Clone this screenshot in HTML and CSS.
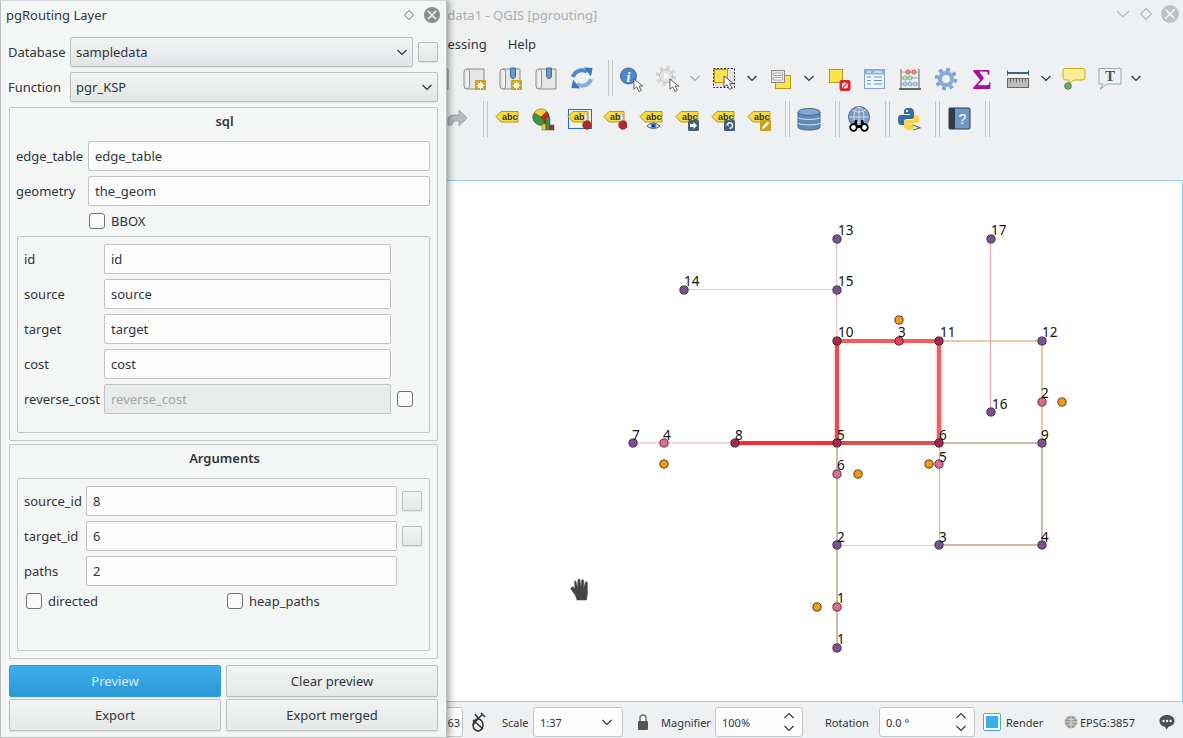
FILE: index.html
```html
<!doctype html>
<html lang="en">
<head>
  <meta charset="UTF-8">
  <title>pgRouting Layer - QGIS</title>
  <link rel="stylesheet" href="styles.css">
</head>
<body>
<svg class="defs" width="0" height="0">
  <symbol id="chev" viewBox="0 0 12 12"><polyline points="1.5,4 6,8.5 10.5,4" fill="none" stroke="#31363b" stroke-width="1.2"/></symbol>
  <symbol id="cursor" viewBox="0 0 13 16" overflow="visible"><path d="M1 1V12L4 9.5L6.5 14.5L9 13.3L6.7 8.6H10.5Z" fill="#fff" stroke="#555" stroke-width="1"/></symbol>
  <symbol id="scroll" viewBox="0 0 24 24"><path d="M5 3H22V23H5Q2 23 2 20V6Q2 3 5 3Z" fill="#e6e6e6" stroke="#8c8c8c"/><path d="M5 3Q7.500 3 7.500 6V20Q7.500 23 5 23" fill="#f4f4f4" stroke="#8c8c8c"/></symbol>
  <symbol id="mark" viewBox="0 0 24 24"><path d="M12.500 2H17.500V11L15 13L12.500 11Z" fill="#6f97c4" stroke="#3e6a9a"/></symbol>
  <symbol id="gearbadge" viewBox="0 0 24 24"><rect x="13" y="14" width="11" height="11" rx="1" fill="#c9a31e"/><circle cx="18.500" cy="19.500" r="2.500" fill="#fff"/><path d="M18.500 15.500V23.500M14.500 19.500H22.500M15.700 16.700L21.300 22.300M21.300 16.700L15.700 22.300" stroke="#fff"/></symbol>
  <symbol id="tag" viewBox="0 0 24 24"><path d="M1 9.500L6 4.500H23V15H6Z" fill="#f6dc3c" stroke="#b89a10"/></symbol>
  <symbol id="tagab" viewBox="0 0 24 24"><path d="M1 9.500L6 4.500H21V15H6Z" fill="#f6dc3c" stroke="#b89a10"/><rect x="17" y="7" width="3" height="9" rx="1.500" fill="#fff" stroke="#999" stroke-width=".7"/><circle cx="20" cy="18" r="4.300" fill="#b3262b" stroke="#7c1a1d" stroke-width=".6"/></symbol>
</svg>

<div class="qgis">
  <div class="titlebar">
    <span class="win-title">sampledata1 - QGIS [pgrouting]</span>
    <div class="win-btns">
      <svg width="16" height="16" viewBox="0 0 16 16"><polyline points="2,5 8,11 14,5" fill="none" stroke="#b4b7ba" stroke-width="1.1"/></svg>
      <svg width="16" height="16" viewBox="0 0 16 16"><path d="M8 2.500L13.500 8L8 13.500L2.500 8Z" fill="none" stroke="#b4b7ba" stroke-width="1.1"/></svg>
      <svg width="18" height="18" viewBox="0 0 18 18"><circle cx="9" cy="9" r="9" fill="#bfc2c4"/><path d="M4.500 4.500L13.500 13.500M13.500 4.500L4.500 13.500" stroke="#fff" stroke-width="1.3"/></svg>
    </div>
  </div>
  <div class="menubar">
    <span>Processing</span><span>Help</span>
  </div>

  <div class="toolbars">
    <div class="toolbar tb-one">
      <div class="tb"><svg viewBox="0 0 24 24"><use href="#scroll"/></svg></div>
      <div class="tb"><svg viewBox="0 0 24 24"><use href="#scroll"/><use href="#gearbadge"/></svg></div>
      <div class="tb"><svg viewBox="0 0 24 24"><use href="#scroll"/><use href="#mark"/><use href="#gearbadge"/></svg></div>
      <div class="tb"><svg viewBox="0 0 24 24"><use href="#scroll"/><use href="#mark"/></svg></div>
      <div class="tb"><svg viewBox="0 0 24 24"><path d="M3 11A9 9 0 0 1 17 6" fill="none" stroke="#4a8dd0" stroke-width="4"/><path d="M14 1.500L22.500 2L21 10.500Z" fill="#3b78bd"/><path d="M21 13A9 9 0 0 1 7 18" fill="none" stroke="#7fb0e0" stroke-width="4"/><path d="M10 22.500L1.500 22L3 13.500Z" fill="#3b78bd"/></svg></div>
      <div class="sep"></div>
      <div class="tb"><svg viewBox="0 0 24 24"><circle cx="8.500" cy="10" r="8" fill="#4f86c6" stroke="#3a6aa5"/><text x="8.500" y="15.500" class="info-i">i</text><use href="#cursor" x="13" y="12" width="12" height="15"/></svg></div>
      <div class="tb"><svg viewBox="0 0 24 24"><circle cx="10" cy="10" r="8.500" fill="none" stroke="#d2d4d5" stroke-width="3.500" stroke-dasharray="3.300 3.370"/><circle cx="10" cy="10" r="6.500" fill="#e2e3e3" stroke="#bcbec0"/><path d="M8 6.500L13.500 10L8 13.500Z" fill="#fff"/><use href="#cursor" x="13" y="12" width="12" height="15"/></svg></div>
      <div class="chev chev-gap"><svg class="dim" viewBox="0 0 12 12"><polyline points="1.5,4 6,8.500 10.500,4" fill="none" stroke="#a9acae" stroke-width="1.2"/></svg></div>
      <div class="tb"><svg viewBox="0 0 24 24"><rect x="0.500" y="2.500" width="21" height="19" fill="#e4e4e4" stroke="#333" stroke-dasharray="2 1.500"/><rect x="1.500" y="3.500" width="13" height="13" fill="#fbe14a" stroke="#b59a12"/><use href="#cursor" x="10" y="9" width="13" height="16"/></svg></div>
      <div class="chev chev-gap"><svg viewBox="0 0 12 12"><use href="#chev"/></svg></div>
      <div class="tb"><svg viewBox="0 0 24 24"><rect x="5.500" y="9.500" width="15" height="13" fill="#fbe14a" stroke="#b59a12"/><rect x="1.500" y="4.500" width="13" height="12" fill="#e8e8e8" stroke="#8c8c8c"/><path d="M3.500 7H12.500V9.500H3.500ZM3.500 11.500H12.500V14H3.500Z" fill="#fff" stroke="#8c8c8c" stroke-width=".7"/></svg></div>
      <div class="chev chev-gap"><svg viewBox="0 0 12 12"><use href="#chev"/></svg></div>
      <div class="tb"><svg viewBox="0 0 24 24"><rect x="2.500" y="3.500" width="13" height="13" fill="#fbe14a" stroke="#b59a12"/><rect x="12.500" y="14" width="11" height="11" rx="2" fill="#d9262c"/><circle cx="18" cy="19.500" r="3" fill="#fff"/><path d="M16 21.500L20 17.500" stroke="#d9262c" stroke-width="1.300"/></svg></div>
      <div class="tb"><svg viewBox="0 0 24 24"><rect x="1.500" y="3.500" width="20" height="19" fill="#eef3f9" stroke="#7fa4cf"/><rect x="1.500" y="3.500" width="20" height="5" fill="#8fb2db"/><path d="M4 11H8M11 11H19M4 14.500H8M11 14.500H19M4 18H8M11 18H19" stroke="#6a93c6" stroke-width="1.200"/><path d="M4 6H8M11 6H19" stroke="#fff" stroke-width="1.200"/></svg></div>
      <div class="tb"><svg viewBox="0 0 24 24"><path d="M2 3V22M20 3V22" stroke="#666"/><rect x="0" y="22" width="22" height="2" fill="#666"/><path d="M2 6H20M2 12H20M2 18H20" stroke="#888" stroke-width=".7"/><circle cx="9" cy="6" r="2.200" fill="#ee8f96" stroke="#c33" stroke-width=".6"/><circle cx="15" cy="6" r="2.200" fill="#ee8f96" stroke="#c33" stroke-width=".6"/><circle cx="6" cy="12" r="2.200" fill="#b9e2b0" stroke="#5a9a50" stroke-width=".6"/><circle cx="11" cy="12" r="2.200" fill="#b9e2b0" stroke="#5a9a50" stroke-width=".6"/><circle cx="6" cy="18" r="2" fill="#bdd6f0" stroke="#5a84b8" stroke-width=".6"/><circle cx="11" cy="18" r="2" fill="#bdd6f0" stroke="#5a84b8" stroke-width=".6"/><circle cx="16" cy="18" r="2" fill="#bdd6f0" stroke="#5a84b8" stroke-width=".6"/></svg></div>
      <div class="tb"><svg viewBox="0 0 24 24"><circle cx="11" cy="13" r="9.500" fill="none" stroke="#7ba1d6" stroke-width="3.500" stroke-dasharray="3.700 3.760"/><circle cx="11" cy="13" r="6" fill="none" stroke="#86aadc" stroke-width="4"/></svg></div>
      <div class="tb"><svg viewBox="0 0 24 24"><text x="11" y="23" class="sigma">Σ</text></svg></div>
      <div class="tb"><svg viewBox="0 0 24 24"><path d="M0 7H22" stroke="#3f5f85" stroke-width="2"/><path d="M.5 4.500V9.500M21.500 4.500V9.500" stroke="#3f5f85"/><rect x=".5" y="12.500" width="21" height="9" fill="#bdbdbd" stroke="#666"/><path d="M3.500 13V16.500M6.500 13V15.500M9.500 13V16.500M12.500 13V15.500M15.500 13V16.500M18.500 13V15.500" stroke="#555" stroke-width=".8"/></svg></div>
      <div class="chev"><svg viewBox="0 0 12 12"><use href="#chev"/></svg></div>
      <div class="tb"><svg viewBox="0 0 24 24"><path d="M4 2.500H22Q24 2.500 24 4.500V11Q24 14 21 14H13L8 18V14H4Q2 14 2 11V4.500Q2 2.500 4 2.500Z" fill="#fbee98" stroke="#cfa81c"/><circle cx="7" cy="20" r="3.300" fill="#6fa56a" stroke="#557f50"/></svg></div>
      <div class="tb"><svg viewBox="0 0 24 24"><path d="M2 2.500H24V18H10L3 23.500L6 18H2Z" fill="#eaf2f6" stroke="#a2a4a6"/><text x="13" y="15" class="t-glyph">T</text></svg></div>
      <div class="chev"><svg viewBox="0 0 12 12"><use href="#chev"/></svg></div>
    </div>

    <div class="toolbar tb-two">
      <div class="tb"><svg viewBox="0 0 24 24"><path d="M3 18V13Q3 8 9 8H14V3L22 11L14 19V14H10Q7 14 7 18Z" fill="#b9bbbd" stroke="#a2a4a6"/></svg></div>
      <div class="sep"></div>
      <div class="tb"><svg viewBox="0 0 24 24"><use href="#tag"/><text x="7" y="13.300" class="tag-text">abc</text></svg></div>
      <div class="tb"><svg viewBox="0 0 24 24"><path d="M10 10L3 6A8 8 0 0 1 16 4.500Z" fill="#f3d22c" stroke="#333" stroke-width=".4"/><path d="M10 10L16 4.500A8 8 0 0 1 14 17Z" fill="#c2261f" stroke="#333" stroke-width=".4"/><path d="M10 10L3 6A8 8 0 0 0 14 17Z" fill="#3d9440" stroke="#333" stroke-width=".4"/><rect x="11" y="17" width="4" height="6" fill="#f3d22c" stroke="#333" stroke-width=".4"/><rect x="15" y="10" width="4" height="13" fill="#3d9440" stroke="#333" stroke-width=".4"/><rect x="19" y="18" width="4" height="5" fill="#c2261f" stroke="#333" stroke-width=".4"/></svg></div>
      <div class="tb"><svg viewBox="0 0 24 24"><rect x="1.500" y="2.500" width="23" height="19" fill="none" stroke="#1d6fd6"/><use href="#tagab"/><text x="7" y="13.300" class="tag-text">ab</text></svg></div>
      <div class="tb"><svg viewBox="0 0 24 24"><use href="#tagab"/><text x="7" y="13.300" class="tag-text">ab</text></svg></div>
      <div class="tb"><svg viewBox="0 0 24 24"><use href="#tag"/><text x="7" y="13.300" class="tag-text">abc</text><path d="M8 19Q14 13 21 19Q14 24 8 19Z" fill="#fff" stroke="#555"/><circle cx="14.500" cy="18.700" r="3" fill="#3b86d0"/><circle cx="14.500" cy="18.700" r="1.200" fill="#123"/></svg></div>
      <div class="tb"><svg viewBox="0 0 24 24"><use href="#tag"/><text x="7" y="13.300" class="tag-text">abc</text><rect x="13" y="13" width="11" height="11" rx="1.500" fill="#3f5f7a"/><path d="M15 17H18.500V15L22 18.500L18.500 22V20H15Z" fill="#fff"/></svg></div>
      <div class="tb"><svg viewBox="0 0 24 24"><use href="#tag"/><text x="7" y="13.300" class="tag-text">abc</text><rect x="13" y="13" width="11" height="11" rx="1.500" fill="#3f5f7a"/><path d="M16 18.500A2.800 2.800 0 1 1 18.500 21.300" fill="none" stroke="#fff" stroke-width="1.400"/><path d="M14.500 17.500H18V20Z" fill="#8fc0e8"/></svg></div>
      <div class="tb"><svg viewBox="0 0 24 24"><use href="#tag"/><text x="7" y="13.300" class="tag-text">abc</text><rect x="13" y="13" width="11" height="11" rx="1" fill="#c9a31e"/><path d="M15 22L16 19L20.500 14.800L22 16.300L17.800 21Z" fill="#fff"/></svg></div>
      <div class="sep"></div>
      <div class="tb"><svg viewBox="0 0 24 24"><path d="M1 5V20C1 22 6 23 12 23S23 22 23 20V5Z" fill="#5f88b5" stroke="#44688f"/><ellipse cx="12" cy="5" rx="11" ry="3.500" fill="#84a8cf" stroke="#44688f"/><path d="M1 10.500C1 13 23 13 23 10.500M1 16C1 18.500 23 18.500 23 16" fill="none" stroke="#dbe6f1"/></svg></div>
      <div class="sep"></div>
      <div class="tb"><svg viewBox="0 0 24 24"><circle cx="12" cy="10" r="10.500" fill="#7c9cc4" stroke="#4d6d96"/><path d="M2 10H22M12 0V20M5 3Q12 7 19 3M5 17Q12 13 19 17" fill="none" stroke="#dde6f0" stroke-width=".8"/><ellipse cx="12" cy="10" rx="5" ry="10" fill="none" stroke="#dde6f0" stroke-width=".8"/><path d="M5 21L8 13H10V18H14V13H16L19 21Z" fill="#000"/><circle cx="6.500" cy="20.500" r="3.300" fill="#fff" stroke="#000" stroke-width="1.800"/><circle cx="17.500" cy="20.500" r="3.300" fill="#fff" stroke="#000" stroke-width="1.800"/></svg></div>
      <div class="sep"></div>
      <div class="tb"><svg viewBox="0 0 24 24"><path d="M12 1C7 1 7 3 7 5V7H13V8H4C1 8 1 11 1 13C1 16 2 18 4 18H7V15C7 13 8 12 10 12H15C16 12 17 11 17 10V5C17 3 16 1 12 1Z" fill="#356f9f"/><circle cx="10" cy="4" r="1.100" fill="#fff"/><path d="M12 23C17 23 17 21 17 19V17H11V16H20C22 16 22 14 22 12C22 9 21 8 20 8H17V10C17 12 16 13 14 13H10C8 13 7 14 7 15V19C7 21 8 23 12 23Z" fill="#fcd24c"/><path d="M16 18L23 21L16 23" fill="none" stroke="#666" stroke-width="1.100"/></svg></div>
      <div class="sep"></div>
      <div class="tb"><svg viewBox="0 0 24 24"><rect x="2" y="1" width="21" height="21" rx="1" fill="#6d98c8" stroke="#333b44"/><rect x="2" y="1" width="6" height="21" fill="#2f3c4a"/><text x="15.500" y="16.500" class="help-q">?</text></svg></div>
      <div class="sep"></div>
    </div>
  </div>

  <div class="canvas">
    <svg class="map" viewBox="0 181 1182 520" width="1182" height="520">
      <g class="edges">
        <path class="e-pale" d="M836.500 239V341M684 289.500H837M837 545.500H939"/>
        <path class="e-pink" d="M990.500 239V412M939.500 443V545"/>
        <path class="e-light" d="M633 443H735"/>
        <path class="e-orange" d="M939 341H1042V443"/>
        <path class="e-tan" d="M939 443H1042V545H939M837 443V648"/>
        <path class="hl-halo" d="M837 341V443M939 341V443"/>
        <path class="hl-one" d="M837 341H939"/>
        <path class="hl-two" d="M837 341V443M837 443H939"/>
        <path class="hl-one" d="M939 341V443"/>
        <path class="hl-main" d="M735 443H837"/>
      </g>
      <g class="nodes">
        <circle cx="837" cy="239" r="4"/><circle cx="991" cy="239" r="4"/><circle cx="684" cy="290" r="4"/>
        <circle cx="837" cy="290" r="4"/><circle cx="1042" cy="341" r="4"/><circle cx="991" cy="412" r="4"/>
        <circle cx="633" cy="443" r="4"/><circle cx="1042" cy="443" r="4"/><circle cx="837" cy="545" r="4"/>
        <circle cx="939" cy="545" r="4"/><circle cx="1042" cy="545" r="4"/><circle cx="837" cy="648" r="4"/>
      </g>
      <g class="nodes-hl">
        <circle cx="837" cy="341" r="4"/><circle cx="939" cy="341" r="4"/><circle cx="735" cy="443" r="4"/>
        <circle cx="837" cy="443" r="4"/><circle cx="939" cy="443" r="4"/>
      </g>
      <g class="mids">
        <circle cx="1042" cy="402" r="4"/><circle cx="664" cy="443" r="4"/><circle cx="837" cy="474" r="4"/>
        <circle cx="939" cy="464" r="4"/><circle cx="837" cy="607" r="4"/>
      </g>
      <circle class="mid-hl" cx="899" cy="341" r="4"/>
      <g class="orange">
        <circle cx="899" cy="320" r="4"/><circle cx="1062" cy="402" r="4"/><circle cx="664" cy="464" r="4"/>
        <circle cx="858" cy="474" r="4"/><circle cx="929" cy="464" r="4"/><circle cx="817" cy="607" r="4"/>
      </g>
      <g class="labels">
        <text x="838" y="235">13</text><text x="991" y="235">17</text><text x="684" y="286">14</text>
        <text x="838" y="286">15</text><text x="838" y="337">10</text><text x="898" y="337">3</text>
        <text x="940" y="337">11</text><text x="1042" y="337">12</text><text x="1041" y="398">2</text>
        <text x="992" y="409">16</text><text x="632" y="440">7</text><text x="663" y="440">4</text>
        <text x="735" y="440">8</text><text x="837" y="440">5</text><text x="939" y="440">6</text>
        <text x="1041" y="440">9</text><text x="837" y="470">6</text><text x="939" y="462">5</text>
        <text x="837" y="542">2</text><text x="939" y="542">3</text><text x="1041" y="542">4</text>
        <text x="837" y="603">1</text><text x="837" y="644">1</text>
      </g>
      <path class="hand-back" d="M571 590L576 596L578 602H588L590 592V583H571Z"/>
      <path class="hand" d="M570.500 588.500L573 586.500L575 589L574.500 581.500Q575 580 576 581.500L577.500 588L578 579.500Q579 578.500 580 579.500L580.800 588L581.800 580Q582.800 579 583.800 580.300L583.700 588.500L585.500 582Q586.500 581 587.300 582.500L587.500 593L586.500 600H577L575.500 595.500Z"/>
    </svg>
  </div>

  <div class="statusbar">
    <div class="st-field st-coord">63</div>
    <svg class="st-mouse" width="16" height="20" viewBox="0 0 16 20"><ellipse cx="8" cy="13" rx="5" ry="6" fill="#e8e8e8" stroke="#333" stroke-width="1.500"/><path d="M3 8L13 17M3 13Q8 6 12 3M11 1L15 5M5 2L8 6" fill="none" stroke="#333" stroke-width="1.500"/></svg>
    <span class="st-scale">Scale</span>
    <div class="st-field st-combo">1:37<svg viewBox="0 0 12 12"><use href="#chev"/></svg></div>
    <svg class="st-lock" width="12" height="18" viewBox="0 0 12 18"><path d="M3 8V5A3 3 0 0 1 9 5V8" fill="none" stroke="#777" stroke-width="1.500"/><rect x="1" y="8" width="10" height="9" rx="1" fill="#555"/></svg>
    <span class="st-mag">Magnifier</span>
    <div class="st-field st-spin-mag">100%<span class="spin"><svg viewBox="0 0 12 12"><polyline points="1.500,8 6,3.500 10.500,8" fill="none" stroke="#31363b" stroke-width="1.100"/></svg><svg viewBox="0 0 12 12"><use href="#chev"/></svg></span></div>
    <span class="st-rot">Rotation</span>
    <div class="st-field st-spin-rot">0.0 °<span class="spin"><svg viewBox="0 0 12 12"><polyline points="1.500,8 6,3.500 10.500,8" fill="none" stroke="#31363b" stroke-width="1.100"/></svg><svg viewBox="0 0 12 12"><use href="#chev"/></svg></span></div>
    <span class="st-check"></span>
    <span class="st-render">Render</span>
    <svg class="st-globe" width="14" height="14" viewBox="0 0 14 14"><circle cx="7" cy="7" r="6.300" fill="#999"/><path d="M1 7H13M7 1V13M2 3.500Q7 6 12 3.500M2 10.500Q7 8 12 10.500" fill="none" stroke="#eee" stroke-width=".7"/></svg>
    <span class="st-epsg">EPSG:3857</span>
    <svg class="st-bubble" width="16" height="16" viewBox="0 0 16 16"><path d="M8 1C3.500 1 .5 3.500 .5 7C.5 10 3 12.500 6 12.800L7.500 15.500L10 12.500C13 12 15.500 10 15.500 7C15.500 3.500 12.500 1 8 1Z" fill="#4d4f52"/><circle cx="4.500" cy="7" r="1.200" fill="#fff"/><circle cx="8" cy="7" r="1.200" fill="#fff"/><circle cx="11.500" cy="7" r="1.200" fill="#fff"/></svg>
  </div>
</div>

<div class="panel">
  <div class="panel-title">
    <span>pgRouting Layer</span>
    <div class="panel-btns">
      <svg width="12" height="12" viewBox="0 0 12 12"><path d="M6 1.500L10.500 6L6 10.500L1.500 6Z" fill="none" stroke="#6b6f72"/></svg>
      <svg width="16" height="16" viewBox="0 0 16 16"><circle cx="8" cy="8" r="8" fill="#8b8e90"/><path d="M4 4L12 12M12 4L4 12" stroke="#fff" stroke-width="1.500"/></svg>
    </div>
  </div>
  <div class="panel-body">
    <div class="row">
      <label class="lbl-top">Database</label>
      <div class="combo">sampledata<svg viewBox="0 0 12 12"><use href="#chev"/></svg></div>
      <button class="mini"></button>
    </div>
    <div class="row">
      <label class="lbl-top">Function</label>
      <div class="combo">pgr_KSP<svg viewBox="0 0 12 12"><use href="#chev"/></svg></div>
    </div>

    <div class="group">
      <div class="group-title">sql</div>
      <div class="row">
        <label class="lbl-sql">edge_table</label>
        <input class="field" value="edge_table">
      </div>
      <div class="row">
        <label class="lbl-sql">geometry</label>
        <input class="field" value="the_geom">
      </div>
      <div class="check-row bbox">
        <span class="check"></span><span>BBOX</span>
      </div>
      <div class="inner inner-sql">
        <div class="row"><label class="lbl-col">id</label><input class="field w-col" value="id"></div>
        <div class="row"><label class="lbl-col">source</label><input class="field w-col" value="source"></div>
        <div class="row"><label class="lbl-col">target</label><input class="field w-col" value="target"></div>
        <div class="row"><label class="lbl-col">cost</label><input class="field w-col" value="cost"></div>
        <div class="row"><label class="lbl-col">reverse_cost</label><input class="field w-col off" value="reverse_cost" disabled><span class="check check-rev"></span></div>
      </div>
    </div>

    <div class="group group-args">
      <div class="group-title">Arguments</div>
      <div class="inner inner-args">
        <div class="row"><label class="lbl-arg">source_id</label><input class="field w-arg" value="8"><button class="mini"></button></div>
        <div class="row"><label class="lbl-arg">target_id</label><input class="field w-arg" value="6"><button class="mini"></button></div>
        <div class="row"><label class="lbl-arg">paths</label><input class="field w-arg" value="2"></div>
        <div class="arg-checks">
          <div class="check-row"><span class="check"></span><span>directed</span></div>
          <div class="check-row"><span class="check"></span><span>heap_paths</span></div>
        </div>
      </div>
    </div>

    <div class="actions">
      <button class="btn primary">Preview</button>
      <button class="btn">Clear preview</button>
      <button class="btn">Export</button>
      <button class="btn">Export merged</button>
    </div>
  </div>
</div>
</body>
</html>
```

FILE: styles.css
```css
* { box-sizing: border-box; }

html, body {
  margin: 0;
  height: 100%;
  overflow: hidden;
}

body {
  width: 1183px;
  height: 738px;
  position: relative;
  background: #eff0f1;
  color: #31363b;
  font-family: "Noto Sans", sans-serif;
  font-size: 13px;
}

.defs { position: absolute; }

/* main window */
.qgis {
  display: flex;
  flex-direction: column;
  height: 738px;
}

.titlebar {
  height: 30px;
  flex: none;
  display: flex;
  align-items: center;
  padding-left: 403px;
}
.win-title { color: #abafb2; }
.win-btns {
  margin-left: auto;
  display: flex;
  align-items: center;
  gap: 7px;
  padding: 0 4px 2px 0;
}

.menubar {
  height: 28px;
  flex: none;
  width: 536px;
  display: flex;
  justify-content: flex-end;
  align-items: center;
  gap: 21px;
}

.toolbars {
  height: 120px;
  margin-top: 2px;
  flex: none;
}
.toolbar {
  display: flex;
  height: 36px;
}
.tb-one { padding-left: 420px; }
.tb-two { padding-left: 439px; margin-top: 5px; }

.tb {
  width: 36px;
  flex: none;
  display: flex;
  align-items: center;
  justify-content: center;
}
.tb svg {
  width: 24px;
  height: 24px;
  overflow: visible;
}

.chev {
  width: 18px;
  flex: none;
  display: flex;
  align-items: center;
  justify-content: center;
}
.chev svg { width: 12px; height: 12px; }
.chev-gap { margin-right: 3px; }

.sep { width: 14px; flex: none; }
.sep::before {
  content: "";
  display: block;
  width: 3px;
  height: 100%;
  margin-left: 8px;
  border-left: 1px solid #c1c3c5;
  border-right: 1px solid #c1c3c5;
}

.tag-text { font: bold 9px "Liberation Sans", sans-serif; fill: #333; }
.info-i { font: italic bold 14px "Liberation Serif", serif; fill: #fff; text-anchor: middle; }
.sigma { font: bold 30px "Liberation Serif", serif; fill: #a3109b; text-anchor: middle; }
.t-glyph { font: bold 15px "Liberation Serif", serif; fill: #4a5058; text-anchor: middle; }
.help-q { font: 14px "Liberation Sans", sans-serif; fill: #fff; text-anchor: middle; }

/* map canvas */
.canvas {
  flex: none;
  height: 522px;
  background: #fff;
  border: 1px solid #8ed0ea;
  border-left: 0;
}
.map { display: block; }

.edges path { fill: none; }
.e-pale { stroke: #f3bccb; stroke-width: 1; }
.e-pink { stroke: #f29ab2; stroke-width: 1; }
.e-light { stroke: #f8d4dd; stroke-width: 2; }
.e-orange { stroke: #e8b87c; stroke-width: 1.5; }
.e-tan { stroke: #b8a988; stroke-width: 1.5; }
.hl-halo { stroke: rgba(255, 110, 110, .25); stroke-width: 7; }
.hl-one { stroke: #f2605a; stroke-width: 4; }
.hl-two { stroke: #d9534f; stroke-width: 4; }
.hl-main { stroke: #fb2b30; stroke-width: 4; }

.nodes circle { r: 4.1px; fill: #7e4f94; stroke: #3c3340; stroke-width: 1; }
.nodes-hl circle { r: 4.1px; fill: #a8284f; stroke: #3c2a34; stroke-width: 1; }
.mids circle { r: 4.1px; fill: #e06c8c; stroke: #4c3a40; stroke-width: 1; }
.mid-hl { r: 4.1px; fill: #e8405a; stroke: #5a2a34; stroke-width: 1; }
.orange circle { r: 4.1px; fill: #f79a10; stroke: #4c3a20; stroke-width: 1; }
.labels text { font-size: 13.5px; fill: #111; }

.hand { fill: #444; stroke: #444; stroke-width: .5; }
.hand-back { fill: #fff; }

/* status bar */
.statusbar {
  flex: 1;
  display: flex;
  align-items: center;
  padding: 4px 0 0 400px;
  font-size: 11px;
}
.st-field {
  height: 30px;
  display: flex;
  align-items: center;
  flex: none;
  padding: 0 6px;
  background: #fcfcfc;
  border: 1px solid #c2c4c5;
  border-radius: 3px;
}
.st-coord { width: 63px; justify-content: flex-end; padding-right: 2px; }
.st-mouse { margin-left: 7px; flex: none; }
.st-scale { margin-left: 16px; width: 26px; }
.st-combo { margin-left: 5px; width: 90px; justify-content: space-between; }
.st-combo svg { width: 12px; height: 12px; margin-right: 3px; }
.st-lock { margin-left: 14px; flex: none; }
.st-mag { margin-left: 12px; width: 50px; }
.st-spin-mag { margin-left: 4px; width: 88px; justify-content: space-between; }
.st-rot { margin-left: 22px; width: 45px; }
.st-spin-rot { margin-left: 9px; width: 96px; justify-content: space-between; }
.spin { display: flex; flex-direction: column; margin-right: 1px; }
.spin svg { width: 12px; height: 12px; }
.st-check {
  margin-left: 9px;
  width: 16px;
  height: 16px;
  flex: none;
  background: #3daee9;
  border: 2px solid #fff;
  outline: 1px solid #3daee9;
  border-radius: 1px;
}
.st-render { margin-left: 6px; width: 37px; }
.st-globe { margin-left: 21px; flex: none; }
.st-epsg { margin-left: 2px; }
.st-bubble { margin-left: auto; margin-right: 8px; flex: none; }

/* floating plugin panel */
.panel {
  position: absolute;
  left: 0;
  top: 0;
  width: 447px;
  height: 738px;
  background: #f4f5f5;
  border: 1px solid #bcbebf;
  border-top-color: #d5d6d7;
  box-shadow: 2px 0 7px rgba(0, 0, 0, .4);
}
.panel-title {
  height: 29px;
  display: flex;
  align-items: center;
  justify-content: space-between;
  padding: 0 6px 2px 5px;
}
.panel-btns {
  display: flex;
  align-items: center;
  gap: 9px;
}
.panel-body {
  padding: 7px 8px 0;
  display: flex;
  flex-direction: column;
}

.row {
  display: flex;
  align-items: center;
}
.row + .row { margin-top: 5px; }

.lbl-top { width: 61px; margin-left: -1px; margin-right: 1px; flex: none; }
.lbl-sql { width: 72px; flex: none; }
.lbl-col { width: 80px; flex: none; }
.lbl-arg { width: 62px; flex: none; }

.combo {
  flex: 1;
  height: 30px;
  display: flex;
  align-items: center;
  justify-content: space-between;
  padding: 0 4px 0 5px;
  background: linear-gradient(#f2f3f3, #e4e5e6);
  border: 1px solid #bdbfc1;
  border-radius: 2px;
  box-shadow: 0 1px 1px rgba(0, 0, 0, .08);
}
.combo svg { width: 12px; height: 12px; }

.mini {
  width: 20px;
  height: 20px;
  flex: none;
  margin-left: 5px;
  padding: 0;
  background: linear-gradient(#f2f3f3, #e6e7e8);
  border: 1px solid #bdbfc1;
  border-radius: 2px;
  box-shadow: 0 1px 1px rgba(0, 0, 0, .08);
}

.field {
  flex: 1;
  min-width: 0;
  height: 30px;
  padding: 0 6px;
  background: #fcfcfc;
  border: 1px solid #c2c4c5;
  border-radius: 2px;
  color: #31363b;
  font: 13px "Noto Sans", sans-serif;
  outline: none;
}
.w-col { flex: none; width: 287px; }
.w-arg { flex: none; width: 311px; }
.off {
  background: #e9eaea;
  color: #a3a6a8;
}

.group {
  margin-top: 5px;
  padding: 0 7px 7px 6px;
  border: 1px solid #c3c5c6;
  border-radius: 2px;
}
.group-args { margin-top: 3px; }
.group-title {
  height: 28px;
  margin-bottom: 5px;
  padding: 0 0 2px 3px;
  display: flex;
  align-items: center;
  justify-content: center;
  font-weight: 600;
}

.check-row {
  display: flex;
  align-items: center;
  gap: 6px;
  height: 16px;
}
.check {
  width: 16px;
  height: 16px;
  flex: none;
  background: #fbfbfb;
  border: 1px solid #6f7376;
  border-radius: 3px;
}
.bbox { margin: 7px 0 7px 73px; }
.check-rev { margin-left: 6px; }

.inner {
  margin-left: 1px;
  padding: 7px 0 0 6px;
  border: 1px solid #c3c5c6;
  border-radius: 2px;
}
.inner-sql { padding-bottom: 18px; }
.inner-args { padding-bottom: 41px; }

.arg-checks {
  display: grid;
  grid-template-columns: 201px 1fr;
  margin: 7px 0 0 2px;
}

.actions {
  display: grid;
  grid-template-columns: 212px 212px;
  grid-auto-rows: 32px;
  column-gap: 5px;
  row-gap: 2px;
  margin-top: 6px;
}
.btn {
  background: linear-gradient(#f2f3f3, #e6e7e8);
  border: 1px solid #bdbfc1;
  border-radius: 2px;
  box-shadow: 0 1px 1px rgba(0, 0, 0, .08);
  color: #31363b;
  font: 13px "Noto Sans", sans-serif;
  padding: 0;
}
.primary {
  background: linear-gradient(#3daee9, #2b98d6);
  border-color: #2f9fdc;
  color: #d4ecf9;
}
```
